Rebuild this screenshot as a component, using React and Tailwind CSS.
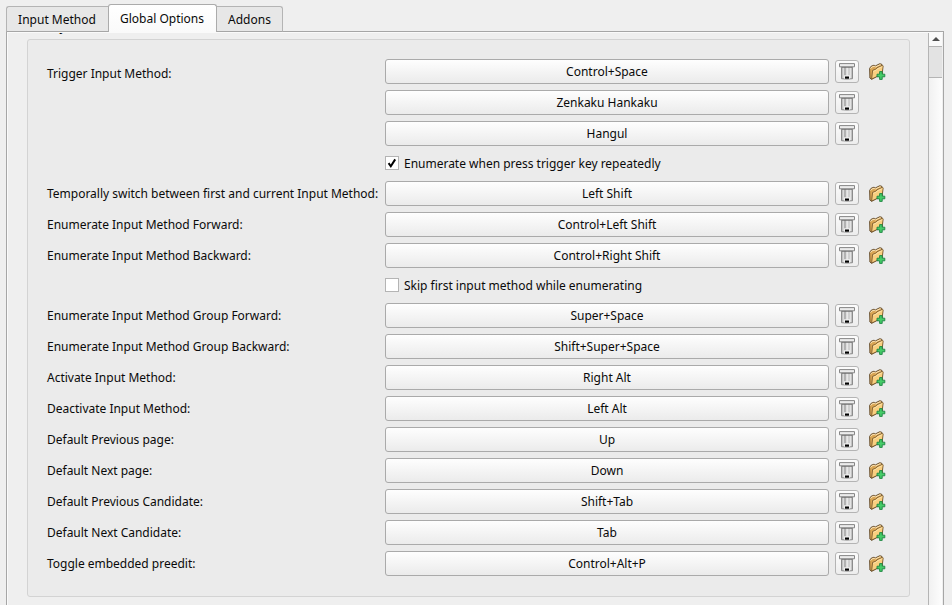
const rows = [
  { label: "Trigger Input Method:", key: "Control+Space", add: true, first: true },
  { key: "Zenkaku Hankaku" },
  { key: "Hangul" },
  { check: "Enumerate when press trigger key repeatedly", checked: true },
  { label: "Temporally switch between first and current Input Method:", key: "Left Shift", add: true },
  { label: "Enumerate Input Method Forward:", key: "Control+Left Shift", add: true },
  { label: "Enumerate Input Method Backward:", key: "Control+Right Shift", add: true },
  { check: "Skip first input method while enumerating", checked: false },
  { label: "Enumerate Input Method Group Forward:", key: "Super+Space", add: true },
  { label: "Enumerate Input Method Group Backward:", key: "Shift+Super+Space", add: true },
  { label: "Activate Input Method:", key: "Right Alt", add: true },
  { label: "Deactivate Input Method:", key: "Left Alt", add: true },
  { label: "Default Previous page:", key: "Up", add: true },
  { label: "Default Next page:", key: "Down", add: true },
  { label: "Default Previous Candidate:", key: "Shift+Tab", add: true },
  { label: "Default Next Candidate:", key: "Tab", add: true },
  { label: "Toggle embedded preedit:", key: "Control+Alt+P", add: true },
];

function BinIcon() {
  return (
    <svg width="16" height="17" viewBox="0 0 16 17">
      <defs>
        <linearGradient id="bin" x1="0" x2="1" y1="0" y2="0">
          <stop offset="0" stopColor="#a8a8a8" />
          <stop offset=".18" stopColor="#dcdcdc" />
          <stop offset=".32" stopColor="#9c9c9c" />
          <stop offset=".5" stopColor="#f4f4f4" />
          <stop offset=".68" stopColor="#c4c4c4" />
          <stop offset=".82" stopColor="#e4e4e4" />
          <stop offset="1" stopColor="#a0a0a0" />
        </linearGradient>
      </defs>
      <path d="M2.5 3.5h11v12.2q-5.5.8-11 0z" fill="url(#bin)" stroke="#8c8c8c" />
      <path d="M.5.6h15v3.2H.5z" fill="#ececec" stroke="#868686" />
      <path d="M3 4.5h10" stroke="#666" opacity=".6" />
      <path d="M5 12.3h6v3.4H5z" fill="#efefef" />
      <path d="M6 13.5h4v2.2H6z" fill="#000" />
    </svg>
  );
}

function FolderAddIcon() {
  return (
    <svg width="17" height="17" viewBox="0 0 17 17">
      <path d="M.9 15 .6 5.4 2.2 3.2l2.8-1 1.4.7L10.8.7l2 .6.8 9L2.6 16.3z" fill="#d9a553" stroke="#5c4526" strokeWidth=".9" strokeLinejoin="round" />
      <path d="M1.6 5.6 2.8 4l2.4-.8 1.3.7 4.5-2.1 1 .3" fill="none" stroke="#fdeac2" strokeWidth=".9" />
      <path d="M2.6 16.1 3.6 7.4l3.2-1.2 1.2-1.4 5.6-2.5.6.8-1.1 8z" fill="#f9cf7f" stroke="#6d4f27" strokeWidth=".8" strokeLinejoin="round" />
      <path d="M4.4 8.3 7.4 7l1.2-1.3 4.4-2" fill="none" stroke="#fde8b8" strokeWidth=".7" />
      <path d="M10.6 8.6h2.6v2.6h2.6v2.6h-2.6v2.6h-2.6v-2.6H8v-2.6h2.6z" fill="#46cd68" stroke="#1c8341" strokeWidth=".9" />
    </svg>
  );
}

function Row({ row }) {
  if (row.check) {
    return (
      <div className="flex h-[23px] items-center pl-[338px]">
        <span className="mb-px flex size-3.5 shrink-0 items-center justify-center border border-[#b4b4b4] bg-white">
          {row.checked && (
            <svg width="12" height="12" viewBox="0 0 12 12">
              <path d="M2.6 6.2 4.8 9.3 9.2 2.4" fill="none" stroke="#000" strokeWidth="2" />
            </svg>
          )}
        </span>
        <span className="ml-[5px] tracking-[-0.01px]">{row.check}</span>
      </div>
    );
  }
  return (
    <div className="flex h-[25px] items-center">
      <span className={row.first ? "w-[338px] shrink-0 pt-1 tracking-[-0.01px]" : "w-[338px] shrink-0 tracking-[-0.01px]"}>{row.label}</span>
      <button className="h-[25px] w-[444px] shrink-0 rounded-[3px] border border-[#aaaaaa] bg-linear-to-b from-[#fefefe] to-[#ebebeb]">
        {row.key}
      </button>
      <button className="ml-1.5 flex h-[23px] w-6 shrink-0 items-center justify-center rounded-[3px] border border-[#b4b4b4] bg-linear-to-b from-[#fcfcfc] to-[#ededed]">
        <BinIcon />
      </button>
      {row.add && (
        <span className="ml-[10px] shrink-0">
          <FolderAddIcon />
        </span>
      )}
    </div>
  );
}

export default function App() {
  return (
    <div className="flex h-[605px] w-[952px] flex-col overflow-hidden bg-[#efefef] pl-1.5 pt-1 font-['Noto_Sans',sans-serif] text-[12px] leading-4 whitespace-nowrap text-[#0a0a0a]">
      <div className="relative z-10 flex h-[28px] items-end">
        <div className="flex h-[26px] w-[102px] items-center justify-center rounded-tl-[3px] border border-r-0 border-[#b4b4b4] border-b-[#a6a6a6] bg-[#e7e7e7] pt-0.5 pr-px">
          Input Method
        </div>
        <div className="flex h-[28px] w-[109px] items-center justify-center rounded-t-[3px] border border-b-0 border-[#ababab] bg-linear-to-b from-white to-[#fafafa] pr-px">
          Global Options
        </div>
        <div className="flex h-[26px] w-[66px] items-center justify-center rounded-tr-[3px] border border-l-0 border-[#b4b4b4] border-b-[#a6a6a6] bg-[#e7e7e7] pt-0.5">
          Addons
        </div>
      </div>
      <div className="-mt-px flex h-[575px] w-[938px] shrink-0 border border-[#a6a6a6] shadow-[inset_1px_1px_0_#fafafa]">
        <div className="flex flex-1 flex-col pl-5">
          <div className="mt-px h-[6px] overflow-hidden">
            <div className="-mt-3.5 -ml-px">Hotkey</div>
          </div>
          <div className="flex h-[558px] w-[883px] flex-col gap-1.5 rounded-[3px] border border-[#d3d3d3] bg-[#ebebeb] pl-[19px] pt-[19px]">
            {rows.map((row) => (
              <Row key={row.key || row.check} row={row} />
            ))}
          </div>
        </div>
        <div className="mr-px mt-px flex w-[14px] flex-col border-l border-[#b4b4b4] bg-linear-to-r from-[#f1f1f1] to-[#fdfdfd]">
          <div className="flex h-[14px] items-center justify-center border-b border-[#b4b4b4] bg-[#fafafa]">
            <svg className="mb-px" width="8" height="4" viewBox="0 0 8 4">
              <path d="M0 4 4 0l4 4z" fill="#505050" />
            </svg>
          </div>
          <div className="h-[31px] border-b border-[#b4b4b4] bg-[#e3e3e3]" />
        </div>
      </div>
    </div>
  );
}
